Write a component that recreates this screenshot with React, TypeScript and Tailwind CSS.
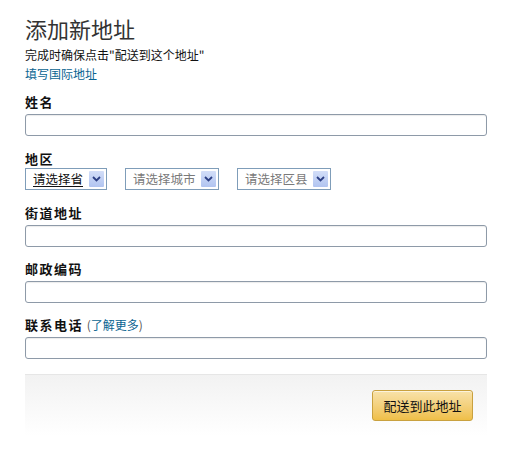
const font = { fontFamily: '"Noto Sans CJK SC", "Liberation Sans", sans-serif' }

function Chevron() {
  return <div className="w-[15px] h-[16px] flex items-center justify-center bg-gradient-to-b from-[#d3def8] to-[#b1c4f0] rounded-[1px]">
    <svg width="9" height="6" viewBox="0 0 9 6">
      <path d="M1 1 L4.5 4.5 L8 1" fill="none" stroke="#2c3f84" strokeWidth="1.8" />
    </svg>
  </div>
}

function FakeSelect(props: { label: string, width: string, active?: boolean }) {
  const { label, width, active } = props
  return <div className={`${width} h-[22px] border border-[#7f9db9] bg-white flex items-center justify-between pl-[7px] pr-[2px]`}>
    <span className={active
      ? "text-[12.5px] leading-[16px] text-[#111] underline underline-offset-2"
      : "text-[12.5px] leading-[16px] text-[#7a7a7a]"}>
      {label}
    </span>
    <Chevron />
  </div>
}

function Field(props: { label: React.ReactNode }) {
  return <div className="flex flex-col">
    <div className="text-[13px] leading-[18px] font-bold tracking-[1.5px] text-[#111] mb-[3px]">
      {props.label}
    </div>
    <div className="h-[22px] w-full border border-[#8e9aa8] rounded-[3px] bg-white shadow-[inset_0_1px_1px_rgba(0,0,0,0.08)]" />
  </div>
}

export default function App() {
  return <div className="w-[532px] h-[451px] bg-white overflow-hidden" style={font}>
    <div className="ml-[25px] w-[462px] flex flex-col">
      <h1 className="mt-[17px] text-[22px] leading-[22px] text-[#333] font-normal">
        {`添加新地址`}
      </h1>
      <div className="mt-[6px] text-[12px] leading-[19px] text-[#111]">
        {`完成时确保点击"配送到这个地址"`}
      </div>
      <a className="text-[12px] leading-[19px] text-[#0a6491]">
        {`填写国际地址`}
      </a>

      <div className="mt-[10px]">
        <Field label={`姓名`} />
      </div>

      <div className="mt-[14px] flex flex-col">
        <div className="text-[13px] leading-[18px] font-bold tracking-[1.5px] text-[#111]">
          {`地区`}
        </div>
        <div className="flex gap-[18px]">
          <FakeSelect label={`请选择省`} width="w-[82px]" active />
          <FakeSelect label={`请选择城市`} width="w-[94px]" />
          <FakeSelect label={`请选择区县`} width="w-[94px]" />
        </div>
      </div>

      <div className="mt-[14px]">
        <Field label={`街道地址`} />
      </div>
      <div className="mt-[13px]">
        <Field label={`邮政编码`} />
      </div>
      <div className="mt-[13px]">
        <Field label={<>{`联系电话`}<span className="font-normal tracking-normal text-[#555] text-[12px] ml-[1px]">{` (`}<a className="text-[#0a6491]">{`了解更多`}</a>{`)`}</span></>} />
      </div>

      <div className="mt-[15px] h-[62px] border-t border-[#e6e6e6] bg-gradient-to-b from-[#f2f2f2] to-white flex justify-end items-start pt-[15px] pr-[14px]">
        <button className="w-[101px] h-[31px] rounded-[3px] border border-[#c9a13f] bg-gradient-to-b from-[#f8e2a9] to-[#efbf47] shadow-[inset_0_1px_0_rgba(255,255,255,0.6)] text-[13px] text-[#111]">
          {`配送到此地址`}
        </button>
      </div>
    </div>
  </div>
}
